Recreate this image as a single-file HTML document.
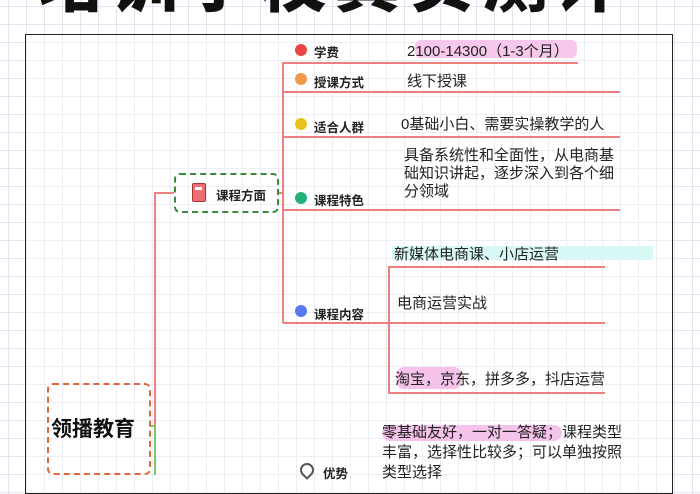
<!DOCTYPE html>
<html><head><meta charset="utf-8"><style>
*{margin:0;padding:0;box-sizing:border-box}
body{width:700px;height:470px;overflow:hidden;position:relative;background:#fff;
background-image:linear-gradient(#e4e4f2 1px,transparent 1px),linear-gradient(90deg,#e4e4f2 1px,transparent 1px);
background-size:18px 18px;background-position:8px 6px;
font-family:"Liberation Sans","Noto Sans CJK SC",sans-serif;color:#222}
.a{position:absolute;white-space:nowrap}
.title{left:38px;top:-70px;font-size:66px;font-weight:900;letter-spacing:8px;color:#111}
.card{left:25px;top:34px;width:648px;height:460px;border:1.5px solid #222;background:rgba(255,255,255,.35)}
.h{position:absolute;height:2px;background:#ea8080}
.v{position:absolute;width:2px;background:#ea8080}
.dot{position:absolute;width:12px;height:12px;border-radius:50%}
.lb{font-size:12.5px;font-weight:bold}
.tx{font-size:15px;color:#222}
</style></head><body>
<div class="a title">培训学校真实测评</div>
<div class="a card"></div>

<div class="h" style="left:283px;top:62px;width:295px"></div>
<div class="h" style="left:283px;top:91px;width:337px"></div>
<div class="h" style="left:283px;top:136px;width:337px"></div>
<div class="h" style="left:283px;top:209px;width:337px"></div>
<div class="h" style="left:283px;top:322px;width:322px"></div>
<div class="v" style="left:282px;top:62px;height:261px"></div>
<div class="h" style="left:389px;top:266px;width:216px"></div>
<div class="h" style="left:389px;top:392px;width:216px"></div>
<div class="v" style="left:388px;top:266px;height:128px"></div>
<div class="h" style="left:155px;top:192px;width:19px"></div>
<div class="h" style="left:278px;top:192px;width:6px"></div>
<div class="v" style="left:154px;top:192px;height:234px"></div>
<div class="v" style="left:154px;top:425px;height:50px;background:#7cc56a"></div>
<div class="h" style="left:150px;top:425px;width:6px;background:#7cc56a"></div>

<div class="dot" style="left:295px;top:44px;background:#ea4444"></div>
<div class="a lb" style="left:314px;top:42px">学费</div>
<div class="a" style="left:415px;top:40px;width:162px;height:18px;background:#f7c8ec;border-radius:6px"></div>
<div class="a tx" style="left:407px;top:40px">2100-14300（1-3个月）</div>

<div class="dot" style="left:295px;top:73px;background:#f29a4a"></div>
<div class="a lb" style="left:314px;top:72px">授课方式</div>
<div class="a tx" style="left:407px;top:70px">线下授课</div>

<div class="dot" style="left:295px;top:118px;background:#e9c21a"></div>
<div class="a lb" style="left:314px;top:117px">适合人群</div>
<div class="a tx" style="left:401px;top:113px">0基础小白、需要实操教学的人</div>

<div class="dot" style="left:295px;top:192px;background:#23b07a"></div>
<div class="a lb" style="left:314px;top:190px">课程特色</div>
<div class="a tx" style="left:404px;top:147px;line-height:18px">具备系统性和全面性，从电商基<br>础知识讲起，逐步深入到各个细<br>分领域</div>

<div class="dot" style="left:295px;top:305px;background:#5878ee"></div>
<div class="a lb" style="left:314px;top:304px">课程内容</div>
<div class="a" style="left:392px;top:246px;width:261px;height:14px;background:#d8f8f6"></div>
<div class="a tx" style="left:394px;top:243px">新媒体电商课、小店运营</div>
<div class="a tx" style="left:397px;top:292px">电商运营实战</div>
<div class="a" style="left:396px;top:367px;width:66px;height:22px;background:#f5c2ea;border-radius:8px"></div>
<div class="a tx" style="left:395px;top:368px">淘宝，京东，拼多多，抖店运营</div>

<div class="a" style="left:174px;top:173px;width:105px;height:40px;border:2.5px dashed #3a8a3a;border-radius:6px"></div>
<div class="a" style="left:192px;top:183px;width:14px;height:19px;background:#ec6e6e;border:1.5px solid #a33;border-radius:2px"></div>
<div class="a" style="left:195px;top:187px;width:7px;height:3px;background:#fff"></div>
<div class="a lb" style="left:216px;top:185px">课程方面</div>

<div class="a" style="left:47px;top:383px;width:104px;height:92px;border:2px dashed #e0663c;border-radius:6px"></div>
<div class="a" style="left:51px;top:413px;font-size:21px;font-weight:bold;color:#111">领播教育</div>

<div class="a" style="left:382px;top:425px;width:180px;height:16px;background:#f5c2ea;border-radius:8px"></div>
<div class="a tx" style="left:382px;top:423px;line-height:20px">零基础友好，一对一答疑；课程类型<br>丰富，选择性比较多；可以单独按照<br>类型选择</div>
<div class="a" style="left:300px;top:463px;width:14px;height:14px;border:2px solid #555;border-radius:50% 50% 0 50%;transform:rotate(45deg)"></div>
<div class="a lb" style="left:323px;top:463px">优势</div>
</body></html>
